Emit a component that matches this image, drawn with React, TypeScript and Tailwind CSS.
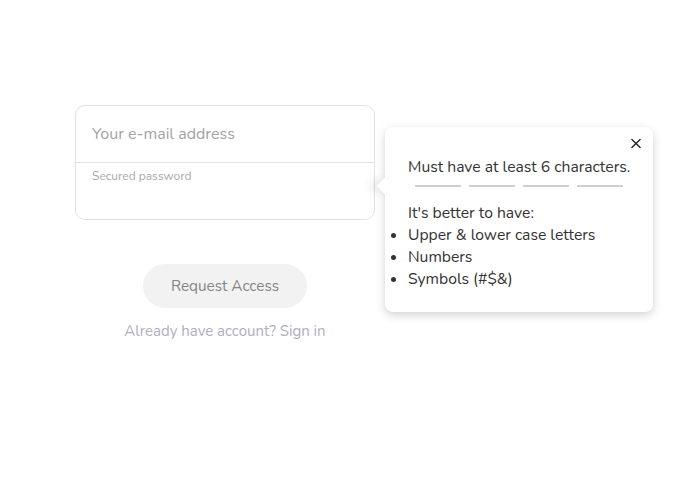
import React from 'react';

const font = { fontFamily: 'Nunito, Lato, "Open Sans", sans-serif' };

const PasswordHint = () => {
  return (
    <div className="relative ml-[10px] mt-[22px] w-[268px] rounded-lg bg-white pl-[23px] pr-4 pt-[29px] pb-[22px] text-[15.7px] leading-[22px] text-[#333] shadow-[0_3px_10px_rgba(0,0,0,0.18)]">
      {/* arrow */}
      <div className="absolute left-[-6px] top-[53px] h-[12px] w-[12px] rotate-45 bg-white shadow-[-5px_5px_10px_rgba(0,0,0,0.1)]" />
      <button className="absolute right-[12px] top-[11px] flex h-[10px] w-[10px] items-center justify-center">
        <svg width="11" height="11" viewBox="0 0 11 11" stroke="#222" strokeWidth="1.5" strokeLinecap="round">
          <path d="M1 1 L10 10 M10 1 L1 10" />
        </svg>
      </button>
      <p>Must have at least 6 characters.</p>
      <div className="mt-[7px] ml-[7px] flex gap-[8px]">
        <span className="h-[2px] w-[46px] bg-[#d0d0d0]" />
        <span className="h-[2px] w-[46px] bg-[#d0d0d0]" />
        <span className="h-[2px] w-[46px] bg-[#d0d0d0]" />
        <span className="h-[2px] w-[46px] bg-[#d0d0d0]" />
      </div>
      <p className="mt-[15px]">It's better to have:</p>
      <ul className="list-disc list-outside">
        <li>Upper &amp; lower case letters</li>
        <li>Numbers</li>
        <li>Symbols (#$&amp;)</li>
      </ul>
    </div>
  );
};

const App = () => {
  return (
    <div className="h-[479px] w-[693px] bg-white" style={font}>
      <div className="flex items-start pl-[75px] pt-[105px]">
        <div className="flex w-[300px] flex-col items-center">
          <div className="w-full rounded-[10px] border border-[#e2e2e2]">
            <div className="flex h-[57px] items-center border-b border-[#e2e2e2] px-4 text-[16px] text-[#a3a3a3]">
              Your e-mail address
            </div>
            <div className="h-[56px] px-4 pt-[5px] text-[12px] leading-[16px] text-[#a8a8a8]">
              Secured password
            </div>
          </div>
          <button className="mt-[44px] h-[44px] w-[164px] rounded-full bg-[#f2f2f2] text-[15.3px] text-[#858585]">
            Request Access
          </button>
          <p className="mt-[12px] text-[15px] text-[#b3adc2]">Already have account? Sign in</p>
        </div>
        <PasswordHint />
      </div>
    </div>
  );
};

export default App;
